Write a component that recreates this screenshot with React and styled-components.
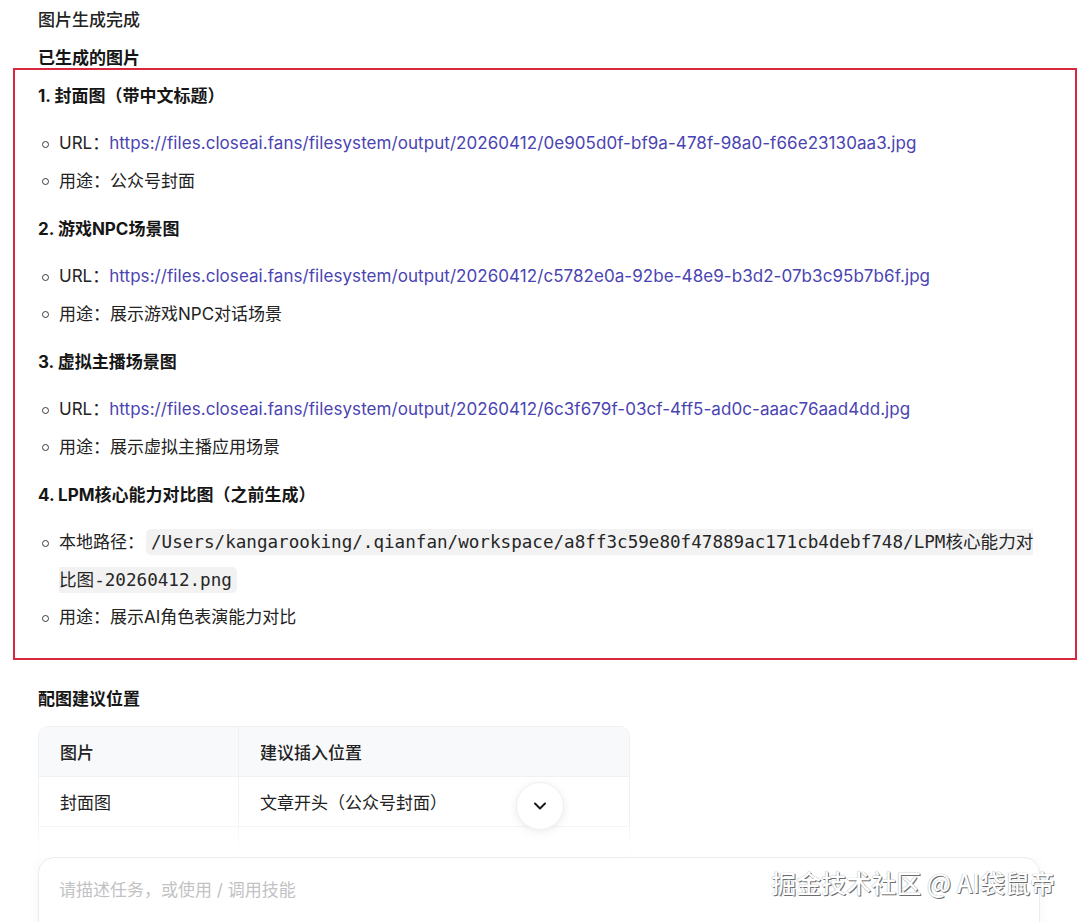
import React from 'react';
import styled, { createGlobalStyle } from 'styled-components';

const GlobalStyle = createGlobalStyle`
  html, body {
    margin: 0;
    padding: 0;
    background: #fff;
  }
  body {
    font-family: Inter, "Noto Sans CJK SC", sans-serif;
    color: #1f1f1f;
  }
`;

const Page = styled.div`
  position: relative;
  height: 100vh;
  display: flex;
  flex-direction: column;
  overflow: hidden;
`;

const Scroll = styled.div`
  position: relative;
  flex: 0 0 857px;
  overflow: hidden;
  padding: 0 40px 0 38px;
`;

const Status = styled.div`
  margin-top: 10px;
  font-size: 17px;
  font-weight: 500;
  line-height: 20px;
  color: #222;
`;

const SectionTitle = styled.div`
  margin-top: ${p => p.gap || 0}px;
  font-size: 17px;
  font-weight: 700;
  line-height: ${p => p.lh || 28}px;
  color: #161616;
`;

const Highlight = styled.div`
  margin: 0 -37px 0 -25px;
  padding: 12px 38px 21px 23px;
  border: 2px solid #d8283f;
`;

const Group = styled.div`
  margin-bottom: 15px;
  &:last-child {
    margin-bottom: 0;
  }
`;

const ItemTitle = styled.h3`
  margin: 0 0 15px;
  font-size: 17px;
  font-weight: 700;
  line-height: 28px;
  color: #161616;
`;

const List = styled.ul`
  list-style: none;
  margin: 0;
  padding-left: 21px;
`;

const Item = styled.li`
  position: relative;
  font-size: 17px;
  line-height: 37.5px;
  color: #222;
  &::before {
    content: '';
    position: absolute;
    left: -17px;
    top: 15.5px;
    width: 5px;
    height: 5px;
    border: 1.3px solid #3a3a3a;
    border-radius: 50%;
  }
`;

const Link = styled.a`
  color: #4a44b2;
  text-decoration: none;
  letter-spacing: 0.06px;
`;

const Code = styled.code`
  font-family: "DejaVu Sans Mono", "Noto Sans CJK SC", monospace;
  font-size: 17.6px;
  background: #f2f2f3;
  color: #262626;
  padding: 3px 5px;
  border-radius: 5px;
  margin-left: 2px;
`;

const Table = styled.table`
  width: 592px;
  border-collapse: separate;
  border-spacing: 0;
  border: 1px solid #f0f0f2;
  border-radius: 10px;
  overflow: hidden;
  margin-top: 13px;
  font-size: 17px;
`;

const Cell = styled.td`
  height: 50px;
  padding: 0 21px;
  width: ${p => p.w || 'auto'};
  box-sizing: border-box;
  text-align: left;
  color: #222;
  font-weight: ${p => (p.head ? 500 : 400)};
  background: ${p => (p.head ? '#f8f9fb' : '#fff')};
  border-bottom: 1px solid #f1f1f3;
  & + & {
    border-left: 1px solid #f1f1f3;
  }
`;

const Fade = styled.div`
  position: absolute;
  left: 0;
  right: 0;
  bottom: 0;
  height: 40px;
  background: linear-gradient(to bottom, rgba(255, 255, 255, 0), rgba(255, 255, 255, 0.85) 70%);
  pointer-events: none;
`;

const ScrollButton = styled.button`
  position: absolute;
  left: 50%;
  bottom: 27px;
  transform: translateX(-50%);
  width: 48px;
  height: 48px;
  border-radius: 50%;
  border: 1px solid #f0f0f0;
  background: #fff;
  box-shadow: 0 2px 10px rgba(0, 0, 0, 0.08);
  display: flex;
  align-items: center;
  justify-content: center;
  padding: 0;
`;

const Composer = styled.div`
  flex: 0 0 120px;
  margin: 0 40px 0 38px;
  box-sizing: border-box;
  border: 1px solid #ececef;
  border-radius: 16px;
  padding: 20px;
  box-shadow: 0 0 14px rgba(0, 0, 0, 0.04);
`;

const Placeholder = styled.div`
  font-size: 17px;
  line-height: 24px;
  color: #c2c2c4;
`;

const Watermark = styled.div`
  position: absolute;
  right: 25px;
  bottom: 25px;
  font-family: "Noto Sans CJK SC", sans-serif;
  font-size: 25px;
  font-weight: 500;
  line-height: 30px;
  color: #fff;
  text-shadow: 1px 1px 0 #6d6d6d, 0 0 1px #8a8a8a;
`;

const images = [
  {
    title: '1. 封面图（带中文标题）',
    url: 'https://files.closeai.fans/filesystem/output/20260412/0e905d0f-bf9a-478f-98a0-f66e23130aa3.jpg',
    usage: '公众号封面',
  },
  {
    title: '2. 游戏NPC场景图',
    url: 'https://files.closeai.fans/filesystem/output/20260412/c5782e0a-92be-48e9-b3d2-07b3c95b7b6f.jpg',
    usage: '展示游戏NPC对话场景',
  },
  {
    title: '3. 虚拟主播场景图',
    url: 'https://files.closeai.fans/filesystem/output/20260412/6c3f679f-03cf-4ff5-ad0c-aaac76aad4dd.jpg',
    usage: '展示虚拟主播应用场景',
  },
  {
    title: '4. LPM核心能力对比图（之前生成）',
    path: '/Users/kangarooking/.qianfan/workspace/a8ff3c59e80f47889ac171cb4debf748/LPM核心能力对比图-20260412.png',
    usage: '展示AI角色表演能力对比',
  },
];

const placements = [
  ['封面图', '文章开头（公众号封面）'],
  ['', ''],
];

const ChevronDown = () => (
  <svg width="20" height="20" viewBox="0 0 24 24" fill="none" stroke="#1a1a1a" strokeWidth="2.4" strokeLinecap="round" strokeLinejoin="round">
    <path d="M6 9l6 6 6-6" />
  </svg>
);

const App = () => (
  <Page>
    <GlobalStyle />
    <Scroll>
      <Status>图片生成完成</Status>
      <SectionTitle gap={18} lh={20}>已生成的图片</SectionTitle>
      <Highlight>
        {images.map(image => (
          <Group key={image.title}>
            <ItemTitle>{image.title}</ItemTitle>
            <List>
              {image.url ? (
                <Item>
                  URL：<Link href={image.url}>{image.url}</Link>
                </Item>
              ) : (
                <Item>
                  本地路径：<Code>{image.path}</Code>
                </Item>
              )}
              <Item>用途：{image.usage}</Item>
            </List>
          </Group>
        ))}
      </Highlight>
      <SectionTitle gap={25}>配图建议位置</SectionTitle>
      <Table>
        <tbody>
          <tr>
            <Cell head w="199px">图片</Cell>
            <Cell head>建议插入位置</Cell>
          </tr>
          {placements.map((row, i) => (
            <tr key={i}>
              <Cell w="199px">{row[0]}</Cell>
              <Cell>{row[1]}</Cell>
            </tr>
          ))}
        </tbody>
      </Table>
      <Fade />
      <ScrollButton aria-label="滚动到底部">
        <ChevronDown />
      </ScrollButton>
    </Scroll>
    <Composer>
      <Placeholder>请描述任务，或使用 / 调用技能</Placeholder>
    </Composer>
    <Watermark>掘金技术社区 @ AI袋鼠帝</Watermark>
  </Page>
);

export default App;
